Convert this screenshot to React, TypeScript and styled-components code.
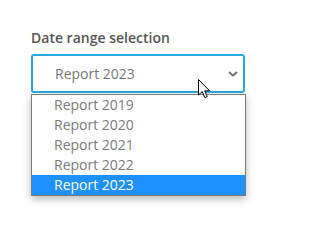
import React from 'react';
import styled, { createGlobalStyle } from 'styled-components';

const GlobalStyle = createGlobalStyle`
  html, body {
    margin: 0;
    padding: 0;
    background: #ffffff;
  }
  body {
    font-family: "Open Sans", "Liberation Sans", sans-serif;
  }
`;

const Page = styled.div`
  width: 275px;
  height: 224px;
  padding: 28px 0 0 31px;
  box-sizing: border-box;
`;

const Label = styled.div`
  font-size: 14px;
  line-height: 19px;
  font-weight: 600;
  color: #555555;
  margin-bottom: 7px;
`;

const Field = styled.div`
  position: relative;
  width: 214px;
`;

const SelectBox = styled.div`
  height: 39px;
  box-sizing: border-box;
  border: 2px solid #27a9e1;
  border-radius: 3px;
  display: flex;
  align-items: center;
  justify-content: space-between;
  padding: 0 5px 0 22px;
  font-size: 14px;
  color: #777777;
`;

const Chevron = styled.svg`
  width: 10px;
  height: 6px;
  display: block;
`;

const Menu = styled.ul`
  position: absolute;
  top: 40px;
  left: 0;
  width: 215px;
  margin: 0;
  padding: 0;
  list-style: none;
  box-sizing: border-box;
  background: #ffffff;
  border: 1px solid #7a7a7a;
  box-shadow: 0 3px 8px rgba(0, 0, 0, 0.28);
`;

const Option = styled.li<{ $selected?: boolean }>`
  height: 20px;
  line-height: 20px;
  padding-left: 22px;
  font-size: 14px;
  color: ${({ $selected }) => ($selected ? '#ffffff' : '#7a7a7a')};
  background: ${({ $selected }) => ($selected ? '#1e90ff' : 'transparent')};
`;

const Cursor = styled.svg`
  position: absolute;
  left: 167px;
  top: 25px;
  width: 14px;
  height: 21px;
  z-index: 2;
`;

const years = ['2019', '2020', '2021', '2022', '2023'];

function App() {
  return (
    <Page>
      <GlobalStyle />
      <Label>Date range selection</Label>
      <Field>
        <SelectBox>
          <span>Report 2023</span>
          <Chevron viewBox="0 0 10 6">
            <path d="M1 1 L5 4.6 L9 1" fill="none" stroke="#6b6b6b" strokeWidth="1.8" />
          </Chevron>
        </SelectBox>
        <Menu>
          {years.map((y) => (
            <Option key={y} $selected={y === '2023'}>
              Report {y}
            </Option>
          ))}
        </Menu>
        <Cursor viewBox="0 0 14 21">
          <path
            d="M0.5 0.5 L0.5 16 L4.2 12.6 L6.8 18.6 L9.2 17.6 L6.7 11.8 L11.6 11.8 Z"
            fill="#ffffff"
            stroke="#000000"
            strokeWidth="1"
            strokeLinejoin="miter"
          />
        </Cursor>
      </Field>
    </Page>
  );
}

export default App;
